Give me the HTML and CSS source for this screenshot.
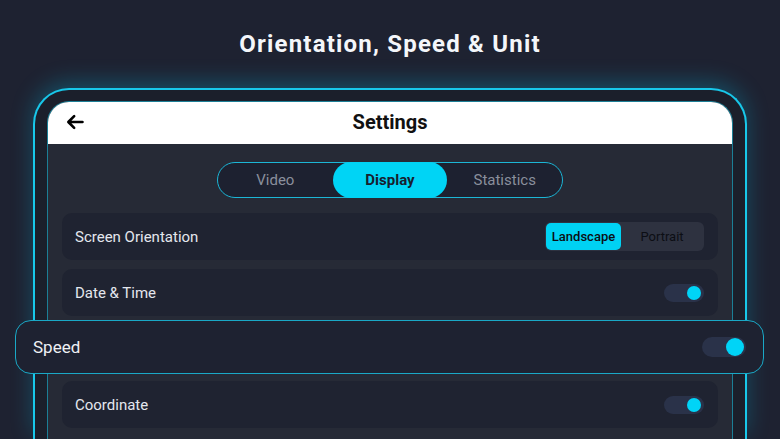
FILE: index.html
```html
<!DOCTYPE html>
<html lang="en">
<head>
  <meta charset="UTF-8">
  <meta name="viewport" content="width=device-width, initial-scale=1.0">
  <title>Orientation, Speed &amp; Unit</title>
  <link rel="stylesheet" href="styles.css">
</head>
<body>
  <h1 class="title">Orientation, Speed &amp; Unit</h1>

  <div class="phone">
    <div class="screen">
      <div class="topbar">
        <svg class="back" width="20" height="20" viewBox="0 0 24 24">
          <path d="M21 12H4.5M11 5l-7 7 7 7" fill="none" stroke="#000" stroke-width="3.1" stroke-linecap="round" stroke-linejoin="round"/>
        </svg>
        <span class="topbar-title">Settings</span>
      </div>

      <div class="content">
        <div class="tabs">
          <div class="tab">Video</div>
          <div class="tab active">Display</div>
          <div class="tab">Statistics</div>
        </div>

        <div class="rows">
          <div class="row">
            <span>Screen Orientation</span>
            <div class="segment">
              <div class="seg active">Landscape</div>
              <div class="seg">Portrait</div>
            </div>
          </div>
          <div class="row">
            <span>Date &amp; Time</span>
            <div class="toggle"><div class="knob"></div></div>
          </div>
          <!-- the Speed row is shown enlarged above the phone -->
          <div class="row"></div>
          <div class="row">
            <span>Coordinate</span>
            <div class="toggle"><div class="knob"></div></div>
          </div>
        </div>
      </div>
    </div>
  </div>

  <div class="focus-row">
    <span>Speed</span>
    <div class="toggle big"><div class="knob"></div></div>
  </div>
</body>
</html>
```

FILE: styles.css
```css
body {
  font-family: Roboto, "Noto Sans", sans-serif;
  background-color: #1e2231;
  margin: 0;
  padding: 0;
  height: 439px;
  overflow: hidden;
  position: relative;
}

.title {
  margin: 0;
  padding-top: 29px;
  height: 88px;
  box-sizing: border-box;
  text-align: center;
  color: #f4f6fa;
  font-size: 24px;
  font-weight: 700;
  letter-spacing: 1.2px;
  line-height: 30px;
}

.phone {
  margin: 0 33px;
  height: 351px;
  box-sizing: border-box;
  padding: 11px 12px 0;
  border: 2px solid #18c8ea;
  border-bottom: none;
  border-radius: 36px 36px 0 0;
  background-color: #1b1f2b;
  box-shadow: 0 -6px 22px rgba(0, 190, 230, 0.28);
}

.screen {
  height: 100%;
  border: 1px solid #1c7f96;
  border-bottom: none;
  border-radius: 22px 22px 0 0;
  overflow: hidden;
  background-color: #262a36;
}

.topbar {
  height: 42px;
  padding-bottom: 3px;
  box-sizing: border-box;
  background-color: #fff;
  display: flex;
  align-items: center;
  justify-content: center;
  position: relative;
}

.back {
  position: absolute;
  left: 17px;
  top: 10px;
}

.topbar-title {
  font-size: 20px;
  font-weight: 700;
  color: #111;
}

.content {
  padding: 18px 14px 0;
}

.tabs {
  width: 344px;
  height: 34px;
  margin: 0 auto;
  border: 1px solid #1cb6d6;
  border-radius: 18px;
  display: flex;
  background-color: #1d2130;
}

.tab {
  flex: 1;
  display: flex;
  align-items: center;
  justify-content: center;
  font-size: 15px;
  color: #8a8f9c;
  border-radius: 18px;
}

.tab.active {
  background-color: #00d4f5;
  color: #17202e;
  font-weight: 700;
  margin: -1px 0;
}

.rows {
  margin-top: 15px;
  display: flex;
  flex-direction: column;
  gap: 9px;
}

.row {
  height: 47px;
  flex-shrink: 0;
  padding: 0 14px 0 13px;
  border-radius: 10px;
  background-color: #1f2331;
  display: flex;
  align-items: center;
  justify-content: space-between;
  font-size: 15px;
  color: #e4e7ee;
}

.segment {
  width: 159px;
  height: 29px;
  padding: 1px;
  box-sizing: border-box;
  border-radius: 6px;
  background-color: #2e3240;
  display: flex;
}

.seg {
  flex: 1;
  display: flex;
  align-items: center;
  justify-content: center;
  font-size: 13px;
  color: #0c0e14;
  border-radius: 5px;
}

.seg.active {
  flex: 0 0 75px;
  background-color: #00d2f3;
  font-weight: 500;
}

.toggle {
  width: 40px;
  height: 18px;
  border-radius: 9px;
  background-color: #2a3249;
  position: relative;
}

.knob {
  position: absolute;
  right: 3px;
  top: 2px;
  width: 14px;
  height: 14px;
  border-radius: 50%;
  background-color: #00d4f7;
}

.focus-row {
  position: absolute;
  left: 15px;
  top: 320px;
  width: 749px;
  height: 54px;
  box-sizing: border-box;
  padding: 0 17px 0 17px;
  border: 1px solid #1aa8c6;
  border-radius: 16px;
  background-color: #1e2231;
  display: flex;
  align-items: center;
  justify-content: space-between;
  font-size: 17px;
  color: #eef0f4;
}

.toggle.big {
  width: 44px;
  height: 20px;
  border-radius: 10px;
}

.toggle.big .knob {
  right: 2px;
  top: 1px;
  width: 18px;
  height: 18px;
}
```
